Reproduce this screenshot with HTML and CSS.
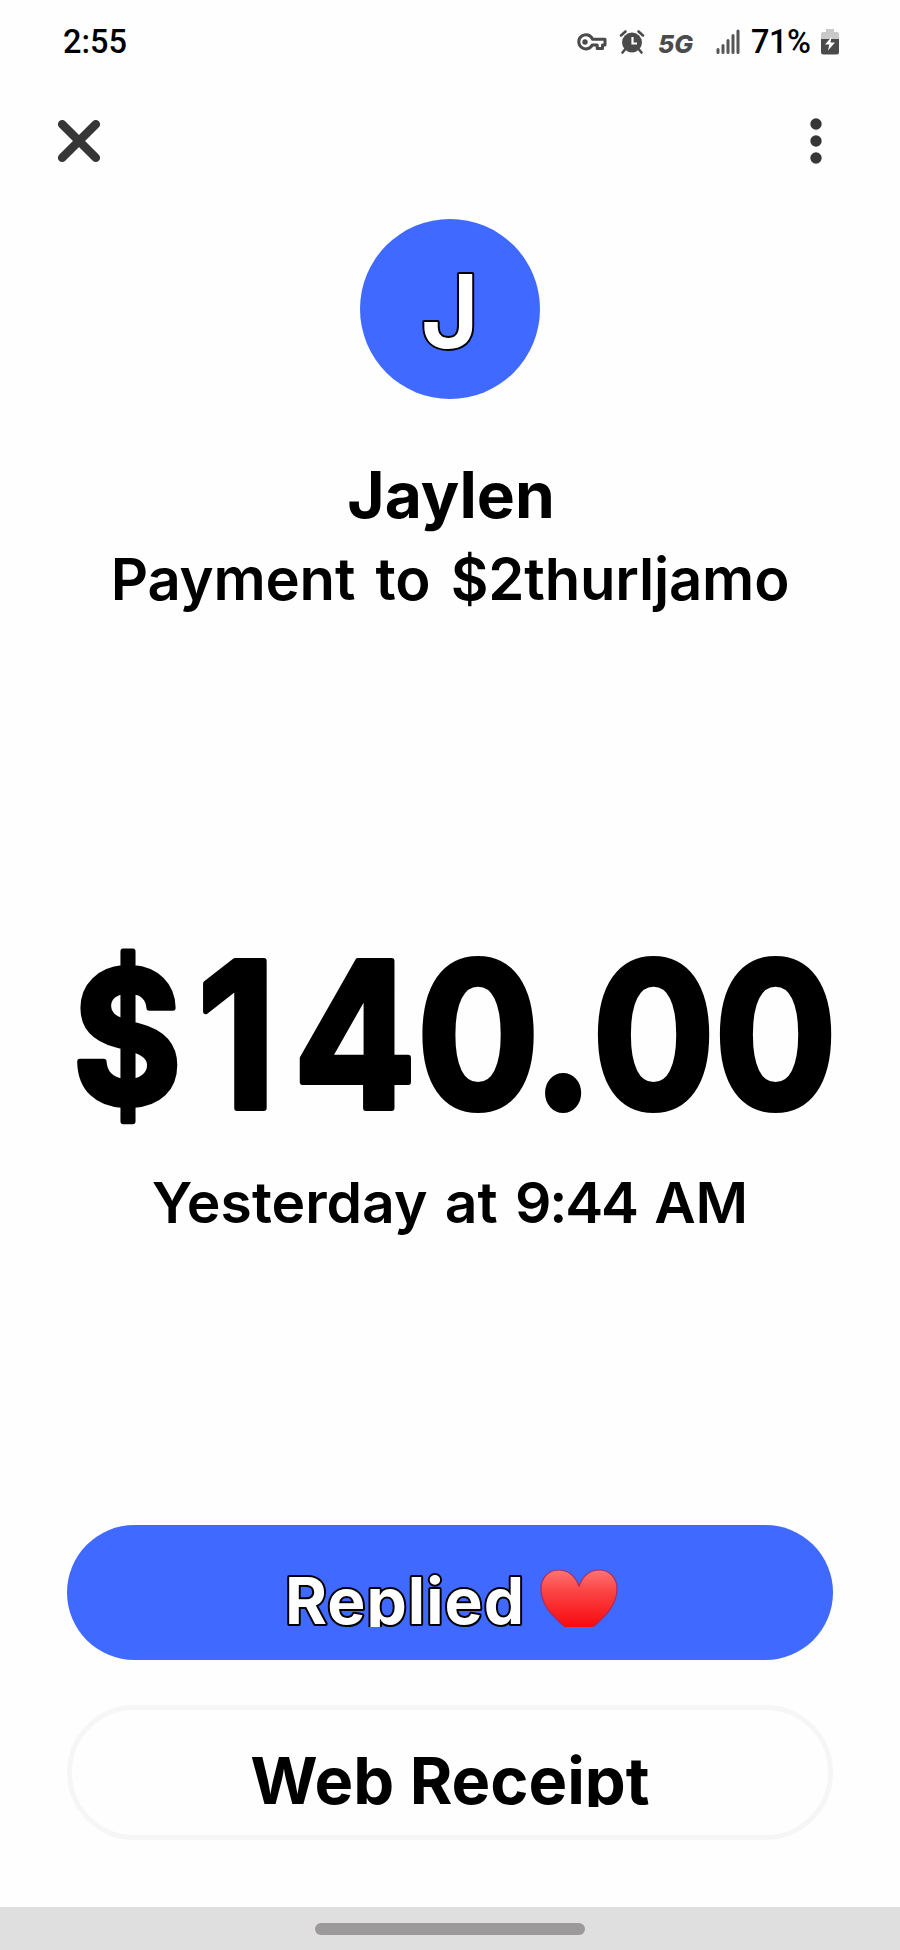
FILE: index.html
```
<!DOCTYPE html>
<html lang="en">
<head>
<meta charset="utf-8">
<title>Payment details</title>
<link rel="stylesheet" href="styles.css">
</head>
<body>
<div class="screen">
  <header class="status">
    <span class="clock">2:55</span>
    <div class="indicators">
      <svg class="key" width="32" height="20" viewBox="0 0 32 20"><path d="M16.500 7.200H29V13H26.500V16.500H21.200V13H16.200A7.100 7.100 0 1 1 16.500 7.200Z" fill="none" stroke="#4b4b4b" stroke-width="3" stroke-linejoin="round"/><circle cx="9" cy="10" r="2.700" fill="#4b4b4b"/></svg>
      <svg class="alarm" width="26" height="26" viewBox="0 0 26 26"><circle cx="13" cy="13.500" r="10" fill="#4b4b4b"/><path d="M2 6.500 6.500 2.500M24 6.500 19.500 2.500M6 20.500 3.500 23.500M20 20.500 22.500 23.500" stroke="#4b4b4b" stroke-width="2.600" stroke-linecap="round"/><path d="M13.500 8V14.500H18" fill="none" stroke="#fff" stroke-width="2.200"/></svg>
      <span class="network">5G</span>
      <svg class="signal" width="24" height="26" viewBox="0 0 24 26"><path d="M2 20.500V23.500M7 16.500V23.500M12 11.500V23.500M17 6.500V23.500M22 2V23.500" stroke="#555" stroke-width="3" stroke-linecap="round"/></svg>
      <span class="percent">71%</span>
      <svg class="battery" width="18" height="27" viewBox="0 0 18 27"><path d="M5 1H13V4H16Q18 4 18 6V12H0V6Q0 4 2 4H5Z" fill="#c9c9c9"/><path d="M0 11H18V24Q18 26.500 15.500 26.500H2.500Q0 26.500 0 24Z" fill="#4b4b4b"/><path d="M10.500 9 4 16.500H8.300L7 22.500 14 14.500H9.500Z" fill="#fff"/></svg>
    </div>
  </header>
  <nav class="toolbar">
    <svg width="44" height="44" viewBox="0 0 44 44"><path d="M5.200 5.200 38.800 38.800M38.800 5.200 5.200 38.800" stroke="#363636" stroke-width="8.600" stroke-linecap="round"/></svg>
    <svg width="12" height="46" viewBox="0 0 12 46"><g fill="#363636"><circle cx="6" cy="6" r="5.700"/><circle cx="6" cy="23" r="5.700"/><circle cx="6" cy="40" r="5.700"/></g></svg>
  </nav>
  <main class="details">
    <div class="avatar"><svg width="180" height="180" viewBox="0 0 180 180"><text class="initial outlined" x="90" y="129" text-anchor="middle">J</text></svg></div>
    <h1 class="name">Jaylen</h1>
    <p class="recipient">Payment to $2thurljamo</p>
    <svg class="amount" width="900" height="210" viewBox="0 0 900 210"><text transform="scale(.9 1)" x="81 219.500 326 463 592 658 793.500" y="175 180 180 180 180 180 180"><tspan class="currency">$</tspan>140.00</text></svg>
    <p class="time">Yesterday at <span class="digits">9:44</span> AM</p>
  </main>
  <div class="actions">
    <button class="button primary">
      <svg width="242" height="59" viewBox="0 0 242 59"><text class="replied outlined" x="1" y="56" textLength="239">Replied</text></svg>
      <svg class="heart" width="78" height="58" viewBox="0 0 78 58"><defs><linearGradient id="red" x1="0" y1="0" x2="0" y2="1"><stop offset="0" stop-color="#ff7573"/><stop offset=".3" stop-color="#fb4545"/><stop offset=".8" stop-color="#f80c10"/></linearGradient></defs><path d="M39 17C35 6 27 1 19 1 8 1 1 9 1 20 1 35 11 46 25 58L39 70 53 58C67 46 77 35 77 20 77 9 70 1 59 1 51 1 43 6 39 17Z" fill="url(#red)" stroke="#a52c62" stroke-width="1.200"/></svg>
    </button>
    <button class="button secondary"><span class="receipt">Web Receipt</span></button>
  </div>
  <footer class="gesture"><div class="handle"></div></footer>
</div>
</body>
</html>
```
FILE: styles.css
```
* { box-sizing: border-box; }
body { margin: 0; background: #fefefe; }
svg { display: block; flex: none; }
h1, p { margin: 0; }
.screen { width: 900px; height: 1950px; display: flex; flex-direction: column; font-family: Inter, sans-serif; color: #000; overflow: hidden; }
.status { height: 83px; padding: 0 61px 0 63px; display: flex; justify-content: space-between; align-items: center; font: 500 32.500px/40px Roboto, sans-serif; }
.indicators { display: flex; align-items: center; }
.alarm { margin-left: 11px; }
.network { width: 40px; margin: 5px 0 0 13px; font: italic 800 25px/30px Inter, sans-serif; color: #4b4b4b; }
.signal { margin-left: 18px; }
.percent { width: 62px; margin-left: 11px; font-weight: 500; letter-spacing: -0.500px; white-space: nowrap; }
.battery { margin-left: 8px; }
.toolbar { height: 99px; padding: 17px 78px 0 57px; display: flex; justify-content: space-between; align-items: center; }
.details { height: 1343px; padding-top: 37px; display: flex; flex-direction: column; align-items: center; white-space: nowrap; }
.avatar { width: 180px; height: 180px; border-radius: 50%; background: #4069ff; }
.outlined { fill: #fff; stroke: #000; stroke-width: 4px; stroke-linejoin: round; paint-order: stroke fill; }
.initial { font: 600 102px Inter, sans-serif; }
.name { margin: 61px 0 0 2px; font-size: 64px; line-height: 70px; font-weight: 700; }
.recipient { margin-top: 19px; font-size: 58px; line-height: 60px; font-weight: 600; letter-spacing: -0.200px; word-spacing: 6px; }
.amount { margin-top: 319px; font: 750 202px Inter, sans-serif; stroke: #000; stroke-width: 6px; stroke-linejoin: round; }
.currency { font-size: 184px; }
.time { margin-top: 35px; font-size: 57px; line-height: 60px; font-weight: 600; word-spacing: 3px; }
.digits { letter-spacing: -2.200px; }
.actions { padding: 0 67px; display: flex; flex-direction: column; gap: 45px; }
.button { height: 135px; border: 0; padding: 0; border-radius: 68px; display: flex; justify-content: center; font: 700 64px/70px Inter, sans-serif; white-space: nowrap; }
.primary { background: #4069ff; padding: 43px 0 0 2px; gap: 14px; }
.replied { font: 750 64px Inter, sans-serif; }
.heart { margin-top: 1px; }
.secondary { background: #fefefe; color: #000; border: 5px solid #f7f6f7; padding-top: 29px; }
.receipt { height: 68px; overflow: hidden; padding: 0 3px; line-height: 84px; font-size: 65px; font-weight: 750; }
.gesture { margin-top: auto; height: 43px; background: #e0dfe0; display: flex; justify-content: center; padding-top: 16px; }
.handle { width: 270px; height: 12px; border-radius: 6px; background: #9b9999; }
```
